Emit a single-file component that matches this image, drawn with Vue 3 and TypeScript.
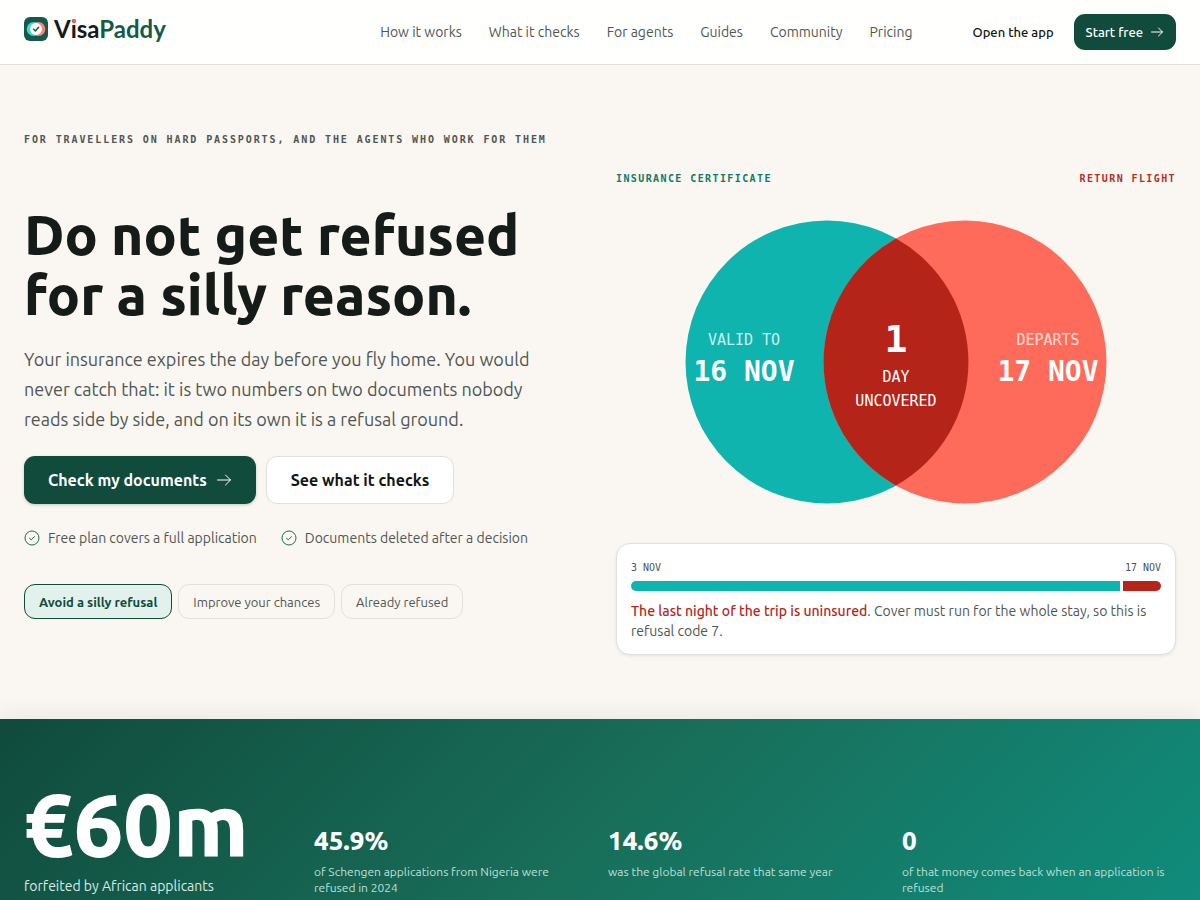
<script setup lang="ts">
import { ref } from 'vue'

const links: string[] = ['How it works', 'What it checks', 'For agents', 'Guides', 'Community', 'Pricing']
const assurances: string[] = ['Free plan covers a full application', 'Documents deleted after a decision']
const goals: string[] = ['Avoid a silly refusal', 'Improve your chances', 'Already refused']
const selected = ref(0)

interface Stat { value: string; label: string }
const stats: Stat[] = [
  { value: '45.9%', label: 'of Schengen applications from Nigeria were refused in 2024' },
  { value: '14.6%', label: 'was the global refusal rate that same year' },
  { value: '0', label: 'of that money comes back when an application is refused' },
]
</script>

<template>
  <div class="page">
    <header class="bar">
      <a class="brand" href="#" aria-label="VisaPaddy">
        <svg class="mark" viewBox="0 0 24 24" aria-hidden="true">
          <rect width="24" height="24" rx="6" fill="#14594a" />
          <circle cx="9.700" cy="12" r="7" fill="#3fd9cb" />
          <circle cx="14.300" cy="12" r="7" fill="#ff8375" />
          <circle cx="12" cy="12" r="6" fill="#fff" />
          <path d="M9.600 12.200l1.800 1.800 3.200-3.800" fill="none" stroke="#14594a" stroke-width="1.500" />
        </svg>
        <span class="word">V<span class="dotted">i</span>sa<span class="paddy">Paddy</span></span>
      </a>
      <nav class="links" aria-label="Main">
        <a v-for="l in links" :key="l" href="#">{{ l }}</a>
      </nav>
      <div class="actions">
        <a class="open" href="#">Open the app</a>
        <button class="start" type="button">
          Start free
          <svg class="arrow-s" viewBox="0 0 14 14" aria-hidden="true"><path d="M1.500 7h11M8.500 3l4 4-4 4" /></svg>
        </button>
      </div>
    </header>

    <main>
      <section class="hero">
        <div class="pitch">
          <p class="eyebrow">For travellers on hard passports, and the agents who work for them</p>
          <h1>Do not get refused<br />for a silly reason.</h1>
          <p class="lead">Your insurance expires the day before you fly home. You would never catch that: it is two numbers on two documents nobody reads side by side, and on its own it is a refusal ground.</p>
          <div class="ctas">
            <button class="primary" type="button">
              Check my documents
              <svg class="arrow" viewBox="0 0 16 16" aria-hidden="true"><path d="M1.500 8h13M9.500 3l5 5-5 5" /></svg>
            </button>
            <button class="secondary" type="button">See what it checks</button>
          </div>
          <ul class="ticks">
            <li v-for="a in assurances" :key="a">
              <svg viewBox="0 0 16 16" aria-hidden="true"><circle cx="8" cy="8" r="7" /><path d="M5.500 8.300l1.800 1.500 3.200-3.200" /></svg>
              {{ a }}
            </li>
          </ul>
          <div class="chips">
            <button v-for="(g, i) in goals" :key="g" type="button" :class="{ on: i === selected }" :aria-pressed="i === selected" @click="selected = i">{{ g }}</button>
          </div>
        </div>

        <div class="proof">
          <div class="captions">
            <span class="cert">Insurance certificate</span>
            <span class="flight">Return flight</span>
          </div>
          <svg class="venn" viewBox="0 0 560 284" role="img" aria-label="Cover valid to 16 Nov, flight departs 17 Nov, 1 day uncovered">
            <circle cx="211" cy="142" r="141.500" fill="#10b4ae" />
            <circle cx="349" cy="142" r="141.500" fill="#ff6b5a" />
            <path d="M280 18.500a141.500 141.500 0 0 1 0 247a141.500 141.500 0 0 1 0-247z" fill="#b52418" />
            <g class="venn-text">
              <text class="small soft" x="128" y="125">VALID TO</text>
              <text class="date" x="128" y="161">16 NOV</text>
              <text class="count" x="280" y="132">1</text>
              <text class="small" x="280" y="162">DAY</text>
              <text class="small" x="280" y="186">UNCOVERED</text>
              <text class="small soft" x="432" y="125">DEPARTS</text>
              <text class="date" x="432" y="161">17 NOV</text>
            </g>
          </svg>
          <div class="trip">
            <div class="dates"><span>3 NOV</span><span>17 NOV</span></div>
            <div class="track"><span class="covered"></span><span class="gap"></span></div>
            <p><strong>The last night of the trip is uninsured</strong>. Cover must run for the whole stay, so this is refusal code 7.</p>
          </div>
        </div>
      </section>

      <section class="stats">
        <div class="total">
          <div class="huge">€60m</div>
          <div class="total-label">forfeited by African applicants</div>
        </div>
        <div class="facts">
          <div v-for="s in stats" :key="s.value">
            <div class="value">{{ s.value }}</div>
            <div class="label">{{ s.label }}</div>
          </div>
        </div>
      </section>
    </main>
  </div>
</template>

<style>
body { margin: 0; background: #faf6f1; }
</style>

<style scoped>
.page { font-family: Ubuntu, "Noto Sans", sans-serif; color: #4f5653; background: #faf6f1; }
h1, p, ul { margin: 0; padding: 0; }
a { color: inherit; text-decoration: none; }
button { font: inherit; cursor: pointer; }
svg path { stroke-linecap: round; stroke-linejoin: round; }

.bar { display: flex; align-items: center; height: 64px; padding: 0 24px; background: #fffffe; border-bottom: 1px solid #e5dfda; }
.brand { display: flex; align-items: center; gap: 6px; padding-bottom: 6px; }
.mark { width: 24px; height: 24px; }
.word { font: 700 24px/28px Lato, sans-serif; color: #141b18; }
.paddy { color: #14594a; }
.dotted { position: relative; }
.dotted::after { content: ""; position: absolute; left: 1px; top: 5px; width: 4px; height: 4px; border-radius: 50%; background: #f0655a; }
.links { display: flex; gap: 27px; margin-left: auto; font-size: 14px; }
.actions { display: flex; align-items: center; gap: 20px; margin-left: 60px; font-size: 13px; font-weight: 500; }
.open { color: #111514; }
.start { display: flex; align-items: center; gap: 7px; height: 36px; padding: 0 12px; border: 0; border-radius: 11px; background: #104b3c; color: #fff; }
.arrow-s { width: 14px; height: 14px; fill: none; stroke: currentColor; stroke-width: 1; }

.hero { display: grid; grid-template-columns: 1fr 1fr; gap: 32px; padding: 64px 24px; }
.eyebrow { font: 700 10px/22px "DejaVu Sans Mono", monospace; letter-spacing: 0.19em; text-transform: uppercase; white-space: nowrap; }
h1 { margin-top: 54px; font-size: 55px; line-height: 60px; font-weight: 800; color: #141b18; white-space: nowrap; }
.lead { max-width: 520px; margin-top: 19px; font-size: 18px; line-height: 30px; }
.ctas { display: flex; gap: 10px; margin-top: 22px; }
.ctas button { display: flex; align-items: center; gap: 9px; height: 48px; padding: 0 24px; border-radius: 11px; font-size: 16px; font-weight: 600; white-space: nowrap; }
.primary { border: 0; background: #104b3c; color: #fff; box-shadow: 0 1px 3px #104b3c40; }
.ctas .secondary { border: 1px solid #e0dfdb; background: #fff; color: #111514; }
.arrow { width: 16px; height: 16px; fill: none; stroke: currentColor; stroke-width: 1; }
.ticks { display: flex; gap: 24px; margin-top: 24px; list-style: none; font-size: 14px; line-height: 20px; white-space: nowrap; }
.ticks li { display: flex; align-items: center; gap: 8px; }
.ticks svg { width: 16px; height: 16px; fill: none; stroke: #177058; stroke-width: 1; }
.chips { display: flex; gap: 6px; margin-top: 36px; }
.chips button { height: 35px; padding: 0 14px; border: 1px solid #e3dfda; border-radius: 11px; background: transparent; color: #4f5653; font-size: 13px; line-height: 16px; white-space: nowrap; }
.chips .on { border-color: #104b3c; background: #e3f1ec; color: #104b3c; font-weight: 600; }

.proof { padding-top: 43px; }
.captions { display: flex; justify-content: space-between; font: 700 10px/14px "DejaVu Sans Mono", monospace; letter-spacing: 0.14em; text-transform: uppercase; }
.cert { color: #0f7a68; }
.flight { color: #b52f26; }
.venn { display: block; width: 100%; margin: 34px 0 39px; }
.venn-text { font-family: "DejaVu Sans Mono", monospace; fill: #fff; text-anchor: middle; }
.small { font-size: 15px; }
.soft { fill-opacity: 0.8; }
.date { font-size: 28px; font-weight: 700; }
.count { font-size: 38px; font-weight: 700; }
.trip { padding: 14px 14px 13px; border: 1px solid #dfe2dc; border-radius: 14px; background: #fff; box-shadow: 0 1px 3px #104b3c1a; font-size: 14px; line-height: 20px; }
.dates { display: flex; justify-content: space-between; font: 10px/20px "DejaVu Sans Mono", monospace; }
.track { display: flex; gap: 3px; height: 10px; margin: 3px 0 10px; border-radius: 5px; overflow: hidden; }
.covered { flex: 13; background: #10b4ae; }
.gap { flex: 1; background: #b52418; }
.trip strong { color: #b0281e; font-weight: 500; }

.stats { display: grid; grid-template-columns: 250px 1fr; gap: 40px; align-items: end; padding: 64px 24px 72px; color: #fff; background: linear-gradient(135deg, #104b3c, #186f5a 50%, #0f8f80); box-shadow: 0 0 24px #104b3c1a; }
.huge { font-size: 88px; line-height: 84px; font-weight: 800; }
.total-label { margin-top: 9px; font-size: 14px; line-height: 20px; color: #d9ebe6; }
.facts { display: grid; grid-template-columns: repeat(3, 1fr); gap: 20px; }
.value { font-size: 26px; line-height: 32px; font-weight: 800; }
.label { margin-top: 7px; font-size: 12px; line-height: 16px; color: #bfe0d8; }
</style>
